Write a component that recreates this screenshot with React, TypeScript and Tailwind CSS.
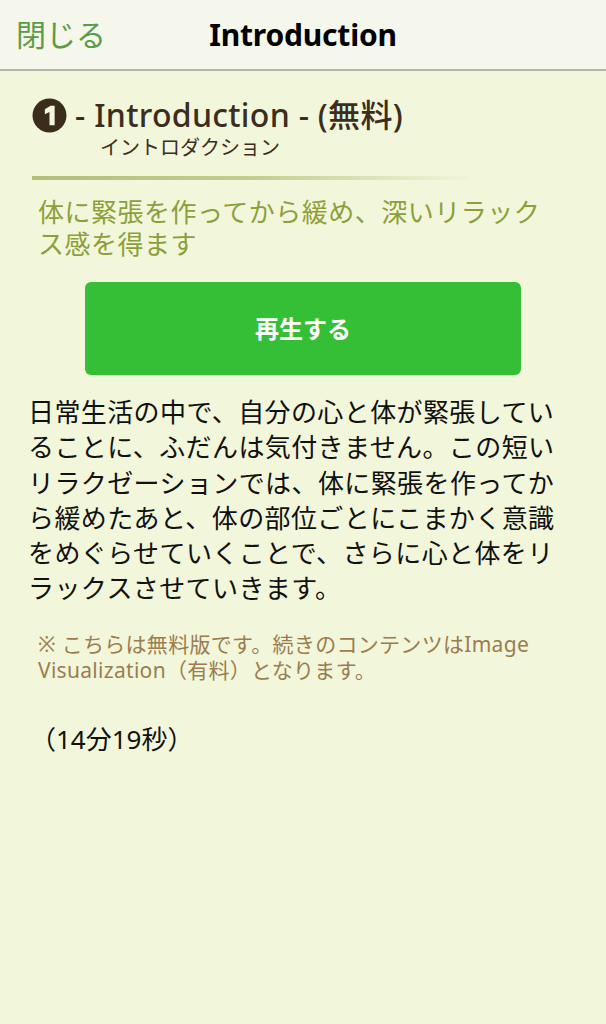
const jp = "font-['Noto_Sans','Noto_Sans_CJK_JP',sans-serif]";

function CircledOne() {
  return (
    <svg width="35" height="35" viewBox="0 0 34 34" className="shrink-0">
      <circle cx="17" cy="17" r="16.5" fill="#3a2d1c" />
      <path d="M12.5 11 L18 7.5 L22 7.5 L22 26.5 L17 26.5 L17 13.5 L12.5 15.8 Z" fill="#f2f6da" />
    </svg>
  );
}

export default function App() {
  return (
    <div className={`min-h-[1024px] w-[606px] bg-[#f2f6da] ${jp}`}>
      <header className="relative flex h-[71px] items-center border-b-2 border-[#b4b6a6] bg-[#f5f6ec]">
        <span className="absolute left-[16px] text-[30px] leading-none text-[#5b9c48]">閉じる</span>
        <h1 className="w-full text-center text-[30px] font-bold leading-none tracking-[-0.2px] text-black">Introduction</h1>
      </header>

      <section className="px-[32px] pt-[25px]">
        <div className="flex items-center gap-[8px] text-[#3b2e1e]">
          <CircledOne />
          <span className="text-[32px] font-medium leading-[38px] tracking-[0.3px]">- Introduction - (無料)</span>
        </div>
        <p className="pl-[68px] text-[20px] leading-[28px] text-[#3b2e1e]">イントロダクション</p>
        <div className="mt-[14px] h-[4px] w-[440px] bg-gradient-to-r from-[#b2c07a] via-[#c2cd90] to-transparent" />
      </section>

      <p className="mt-[16px] pl-[38px] pr-[56px] text-[26px] leading-[32px] tracking-[0.5px] text-[#8d9f3a]">
        体に緊張を作ってから緩め、深いリラックス感を得ます
      </p>

      <div className="mt-[22px] flex justify-center">
        <button className="flex h-[93px] w-[436px] items-center justify-center rounded-[6px] bg-[#35bf36] text-[24px] font-bold text-white">
          再生する
        </button>
      </div>

      <p className="mt-[20px] pl-[28px] pr-[40px] text-[26px] leading-[35.3px] tracking-[0.4px] text-[#111]">
        日常生活の中で、自分の心と体が緊張していることに、ふだんは気付きません。この短いリラクゼーションでは、体に緊張を作ってから緩めたあと、体の部位ごとにこまかく意識をめぐらせていくことで、さらに心と体をリラックスさせていきます。
      </p>

      <p className="mt-[24px] pl-[38px] pr-[50px] text-[21px] leading-[26px] tracking-[0.3px] text-[#9b7d4f]">
        ※ こちらは無料版です。続きのコンテンツはImage Visualization（有料）となります。
      </p>

      <p className="mt-[41px] pl-[30px] text-[26px] leading-[30px] text-[#111]">（14分19秒）</p>
    </div>
  );
}
